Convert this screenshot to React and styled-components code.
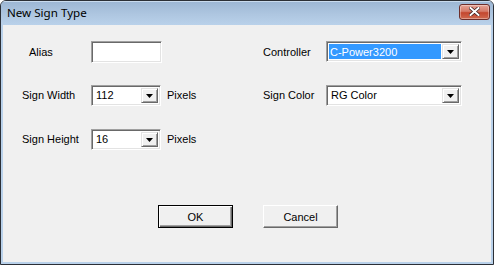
import React from 'react'
import styled, {createGlobalStyle} from "styled-components";

const GlobalStyle=createGlobalStyle`
html,body{
    margin:0;
    padding:0;
    background:#ffffff;
}
`

function Combo({value, width, selected}) {
    return (
        <ComboBox width={width}>
            <ComboText selected={selected}>{value}</ComboText>
            <DropButton>
                <svg width="7" height="4" viewBox="0 0 7 4">
                    <path d="M0 0h7L3.5 4z" fill="#000"/>
                </svg>
            </DropButton>
        </ComboBox>
    )
}

function App() {
    return (
        <>
            <GlobalStyle/>
            <Window>
                <TitleBar>
                    <Title>New Sign Type</Title>
                    <CloseButton>
                        <svg width="11" height="9" viewBox="0 0 11 9">
                            <path d="M1.5 1l8 7M9.5 1l-8 7" stroke="#3b1d1d" strokeWidth="3.4" strokeLinecap="square"/>
                            <path d="M1.5 1l8 7M9.5 1l-8 7" stroke="#fff" strokeWidth="2" strokeLinecap="square"/>
                        </svg>
                    </CloseButton>
                </TitleBar>
                <Client>
                    <Form>
                        <Label indent={7}>Alias</Label>
                        <TextBox/>
                        <span/>
                        <Label>Controller</Label>
                        <Combo value="C-Power3200" width={136} selected/>

                        <Label>Sign Width</Label>
                        <Combo value="112" width={70}/>
                        <Unit>Pixels</Unit>
                        <Label>Sign Color</Label>
                        <Combo value="RG Color" width={136}/>

                        <Label>Sign Height</Label>
                        <Combo value="16" width={70}/>
                        <Unit>Pixels</Unit>
                    </Form>
                    <Buttons>
                        <PushButton isDefault>OK</PushButton>
                        <PushButton>Cancel</PushButton>
                    </Buttons>
                </Client>
            </Window>
        </>
    )
}

export default App

const Window=styled.div`
width:494px;
height:265px;
box-sizing:border-box;
display:flex;
flex-direction:column;
border:1px solid #2b2f36;
border-radius:6px 6px 0 0;
background:#b9d1ea;
padding:0 2px 2px 2px;
overflow:hidden;
font-family:"Liberation Sans",Arial,sans-serif;
font-size:11px;
color:#000;
`

const TitleBar=styled.div`
height:24px;
flex:none;
display:flex;
align-items:center;
justify-content:space-between;
margin:0 -2px;
padding:0 3px 0 6px;
background:linear-gradient(to bottom,#9cb6d4 0%,#aec6e0 55%,#b9d1ea 100%);
box-shadow:inset 0 1px 0 #c9dbee;
`

const Title=styled.span`
font-family:"Noto Sans","Open Sans",sans-serif;
font-size:11.6px;
color:#000;
margin-top:-1px;
`

const CloseButton=styled.div`
width:31px;
height:16px;
margin-top:-3px;
box-sizing:border-box;
display:flex;
align-items:center;
justify-content:center;
border:1px solid #6d2e2b;
border-radius:3px;
background:linear-gradient(to bottom,#e7a497 0%,#d57a68 45%,#c4472f 55%,#d0694f 100%);
box-shadow:inset 0 0 0 1px rgba(255,255,255,0.35);
`

const Client=styled.div`
flex:1;
background:#f0f0f0;
display:flex;
flex-direction:column;
padding:5px 0 0 19px;
`

const Form=styled.div`
display:grid;
grid-template-columns:69px 70px 102px 63px 136px;
grid-template-rows:43px 44px 44px;
align-items:center;
`

const Label=styled.span`
padding-left:${props=>props.indent||0}px;
white-space:nowrap;
`

const Unit=styled.span`
padding-left:6px;
`

const sunken=`
box-sizing:border-box;
height:21px;
background:#fff;
border-style:solid;
border-width:1px;
border-color:#a0a0a0 #fff #fff #a0a0a0;
box-shadow:inset 1px 1px 0 #696969,inset -1px -1px 0 #e3e3e3;
`

const TextBox=styled.div`
${sunken}
width:71px;
height:22px;
`

const ComboBox=styled.div`
${sunken}
width:${props=>props.width}px;
display:flex;
padding:2px;
`

const ComboText=styled.div`
flex:1;
display:flex;
align-items:center;
padding-left:${props=>props.selected?1:2}px;
margin-right:1px;
background:${props=>props.selected?"#3399ff":"#fff"};
color:${props=>props.selected?"#fff":"#000"};
white-space:nowrap;
overflow:hidden;
`

const DropButton=styled.div`
width:17px;
box-sizing:border-box;
display:flex;
align-items:center;
justify-content:center;
background:#f0f0f0;
border-style:solid;
border-width:1px;
border-color:#e3e3e3 #696969 #696969 #e3e3e3;
box-shadow:inset 1px 1px 0 #fff,inset -1px -1px 0 #a0a0a0;
padding-top:1px;
`

const Buttons=styled.div`
display:flex;
gap:30px;
margin-top:44px;
padding-left:136px;
`

const PushButton=styled.div`
width:75px;
height:23px;
box-sizing:border-box;
display:flex;
align-items:center;
justify-content:center;
background:#f0f0f0;
border-style:solid;
border-width:1px;
border-color:${props=>props.isDefault?"#000":"#fff #696969 #696969 #fff"};
box-shadow:${props=>props.isDefault
    ?"inset 1px 1px 0 #fff,inset -1px -1px 0 #696969,inset -2px -2px 0 #a0a0a0"
    :"inset -1px -1px 0 #a0a0a0"};
`
